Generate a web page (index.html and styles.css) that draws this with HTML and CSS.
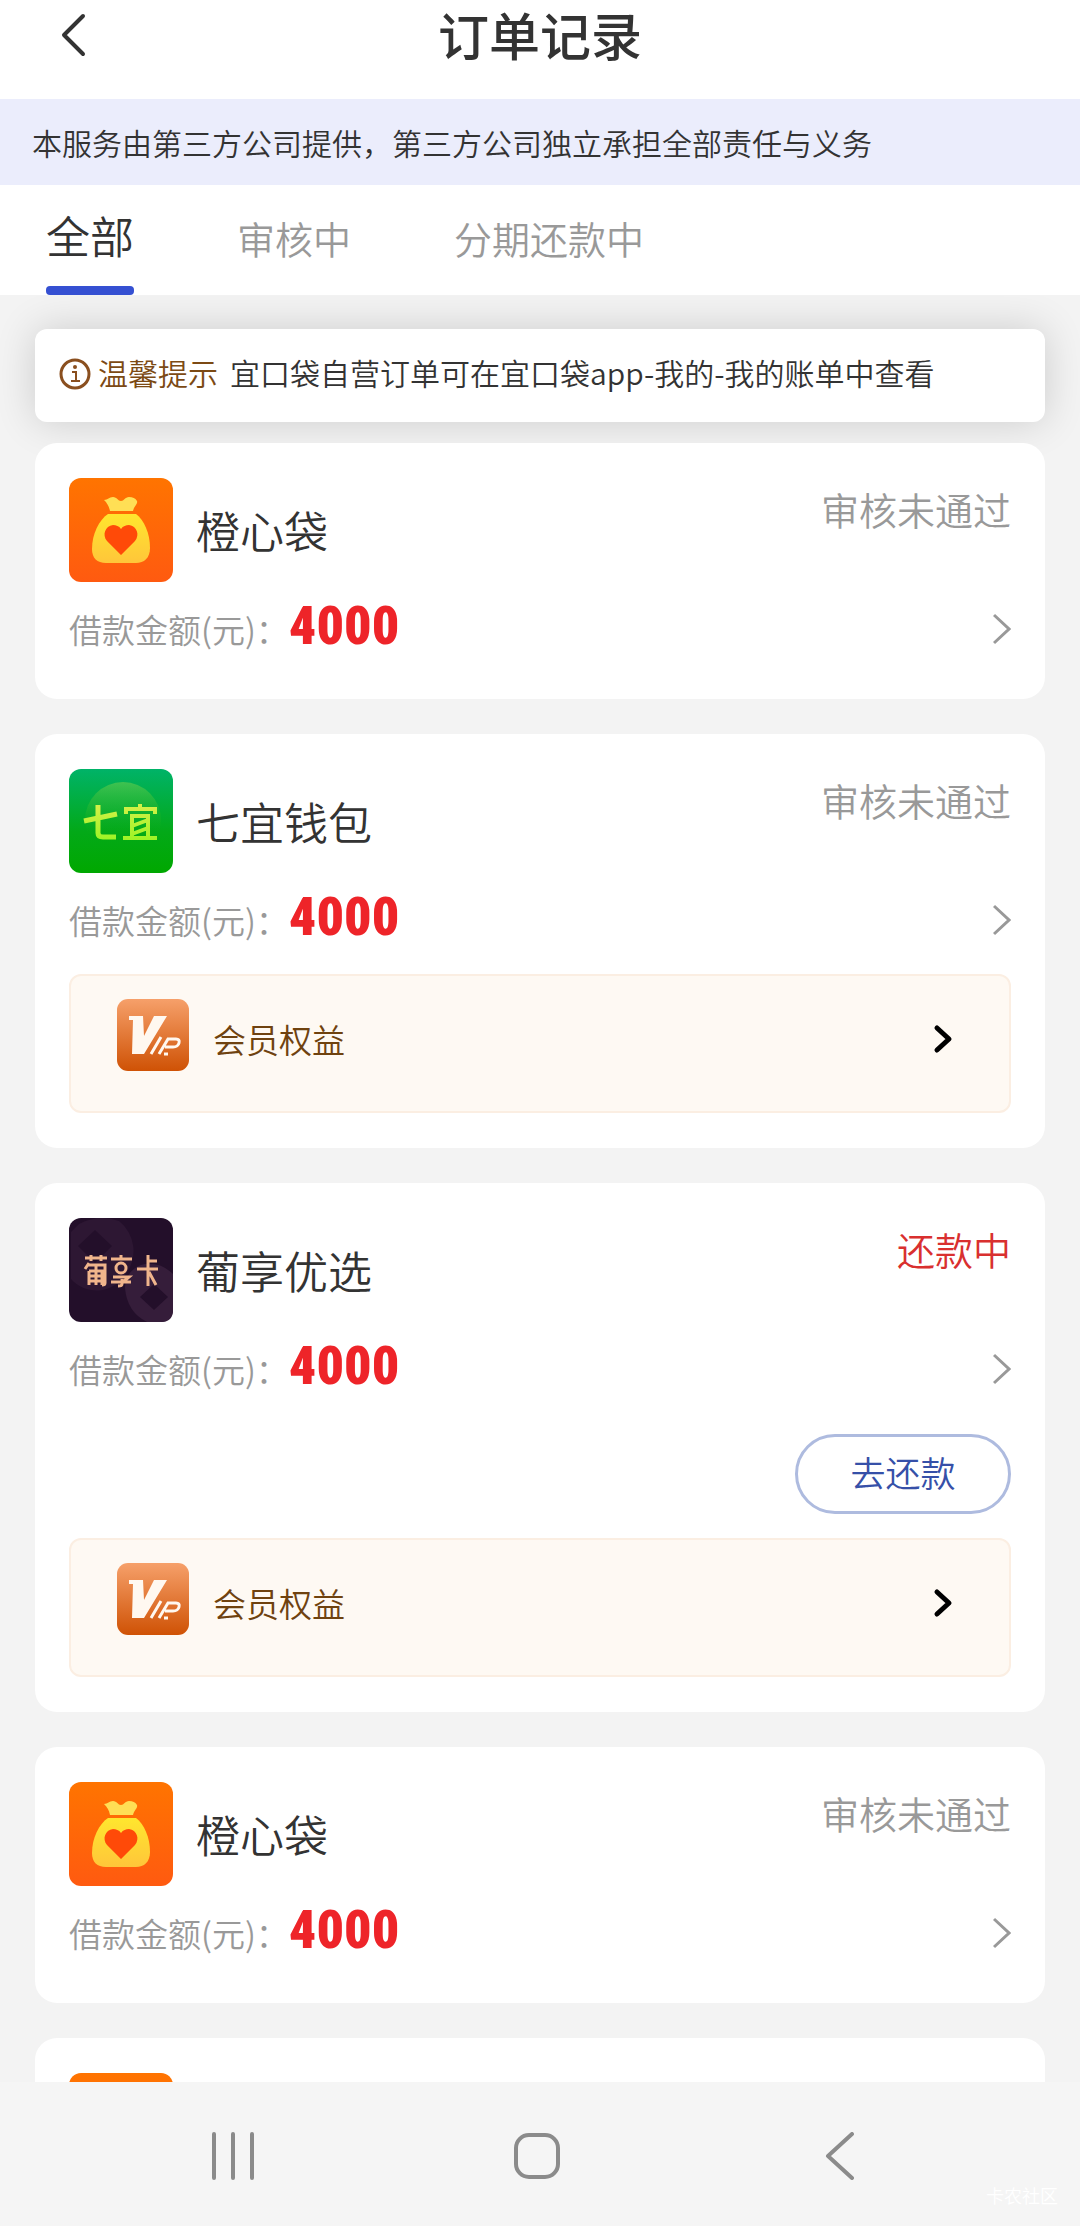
FILE: index.html
```html
<!DOCTYPE html>
<html lang="zh-CN">
<head>
<meta charset="utf-8">
<meta name="viewport" content="width=device-width, initial-scale=1">
<title>订单记录</title>
<link rel="stylesheet" href="styles.css">
</head>
<body>
<svg class="defs" aria-hidden="true">
  <defs>
    <linearGradient id="orange" x1="0" y1="0" x2="0" y2="1"><stop offset="0" stop-color="#ff7400"/><stop offset="1" stop-color="#ff5a10"/></linearGradient>
    <linearGradient id="gold" x1="0" y1="0" x2="0" y2="1"><stop offset="0" stop-color="#ffe62e"/><stop offset="1" stop-color="#ffc63a"/></linearGradient>
    <linearGradient id="green" x1="0" y1="0" x2="0" y2="1"><stop offset="0" stop-color="#00b368"/><stop offset=".6" stop-color="#03a918"/><stop offset="1" stop-color="#00a800"/></linearGradient>
    <linearGradient id="halo" x1="0" y1="0" x2="0" y2="1"><stop offset="0" stop-color="#7fd34a" stop-opacity=".5"/><stop offset=".7" stop-color="#20b010" stop-opacity="0"/></linearGradient>
    <linearGradient id="lime" gradientUnits="userSpaceOnUse" x1="0" y1="34" x2="0" y2="72"><stop offset="0" stop-color="#d8f04a"/><stop offset="1" stop-color="#9bf424"/></linearGradient>
    <linearGradient id="copper" x1="0" y1="0" x2="0" y2="1"><stop offset="0" stop-color="#f6a06a"/><stop offset="1" stop-color="#cf5205"/></linearGradient>
    <symbol id="logo-orange" viewBox="0 0 104 104">
      <rect width="104" height="104" rx="12" fill="url(#orange)"/>
      <path d="M35 22c4 0 5-3 9-3 4 0 5 4 8 4s4-4 8-4 6 1 8 4c1 3-3 5-4 10H41c-1-5-3-8-6-11z" fill="#ffdf55"/>
      <path d="M39 36h28c8 6 14 19 14 34 0 10-6 15-14 15H37c-9 0-14-5-14-14 0-15 7-29 16-35z" fill="url(#gold)"/>
      <path d="M52 77 38 63c-5-6-2-15 6-16 3 0 6 1 8 4 2-3 5-4 8-4 8 1 11 10 6 16z" fill="#ff4a08"/>
    </symbol>
    <symbol id="logo-green" viewBox="0 0 104 104">
      <rect width="104" height="104" rx="12" fill="url(#green)"/>
      <circle cx="54" cy="51" r="38" fill="url(#halo)"/>
      <path d="M15 52 48 45M29 36v28q0 4 5 4h13" fill="none" stroke="url(#lime)" stroke-width="5"/>
      <path d="M57 45v-5h29v5M71 35v5M54 69h34M63 69V47h16v22M63 57l16-6M63 65l16-6" fill="none" stroke="url(#lime)" stroke-width="4"/>
    </symbol>
    <symbol id="logo-grape" viewBox="0 0 104 104">
      <rect width="104" height="104" rx="12" fill="#230f2a"/>
      <path d="M10 6Q30-4 50 3a38 38 0 0 1 6 54 34 34 0 0 1-54 4V14z" fill="#2d1733"/>
      <path d="m26 12 17 16-17 17-17-17z" fill="#230f2a"/>
      <path d="M56 70a24 24 0 0 1 20-24q16-2 28 10v36q0 12-12 12H78Q58 94 56 70z" fill="#351d3a"/>
      <path d="m85 66 14 13-14 13-14-13z" fill="#230f2a"/>
      <g fill="none" stroke="#f0b58c" stroke-width="3">
        <path d="M16 40h22M22 37v6M32 37v6M20 45l-4 6M19 47h17v18q0 2-3 2M20 53v14M20 53h13v14M20 58h13M20 63h13M27 48v19"/>
        <path d="M42 41h21M52 37v4M44 59h16l-6 5M53 61v5q0 2-4 2M42 64h20"/><circle cx="52" cy="50" r="5"/>
        <path d="M79 37v31M79 43h9M68 51h21M80 54l7 13"/>
      </g>
    </symbol>
    <symbol id="logo-vip" viewBox="0 0 72 72">
      <rect width="72" height="72" rx="11" fill="url(#copper)"/>
      <path d="M12 17h14l1 20 10-20h13L27 55H15l1-34h-4z" fill="#fff8f0"/>
      <path d="M34 55l10-17M42 55l9-15h8q4 0 3 4t-6 4h-8M47 55h4" fill="none" stroke="#fff8f0" stroke-width="3"/>
    </symbol>
    <symbol id="go" viewBox="0 0 18 32"><path d="M1 2l15 14L1 30" fill="none" stroke="#999" stroke-width="3"/></symbol>
    <symbol id="go-bold" viewBox="0 0 20 32"><path d="M4 5l12 11L4 27" fill="none" stroke="#000" stroke-width="5" stroke-linecap="round" stroke-linejoin="round"/></symbol>
  </defs>
</svg>

<div class="app">
  <header class="topbar">
    <button class="back" type="button" aria-label="返回">
      <svg width="28" height="68" viewBox="0 0 28 68"><path d="M23 16 4 35l19 19" fill="none" stroke="#333" stroke-width="4" stroke-linecap="round" stroke-linejoin="round"/></svg>
    </button>
    <h1 class="title">订单记录</h1>
  </header>
  <p class="notice">本服务由第三方公司提供，第三方公司独立承担全部责任与义务</p>
  <nav class="tabs">
    <a class="tab active" href="#all">全部</a>
    <a class="tab" href="#review">审核中</a>
    <a class="tab" href="#repay">分期还款中</a>
  </nav>

  <main class="list">
    <p class="tip">
      <svg class="tip-icon" viewBox="0 0 32 32"><circle cx="16" cy="16" r="14" fill="none" stroke="#8a4f1f" stroke-width="3"/><path d="M13 14h4v9M12 23h9" fill="none" stroke="#8a4f1f" stroke-width="2"/><circle cx="16" cy="9" r="2" fill="#8a4f1f"/></svg>
      <strong class="tip-label">温馨提示</strong>
      <span>宜口袋自营订单可在宜口袋app-我的-我的账单中查看</span>
    </p>

    <article class="card">
      <div class="head"><svg class="logo"><use href="#logo-orange"/></svg><h2 class="name">橙心袋</h2><span class="status">审核未通过</span></div>
      <a class="amount" href="#order1"><span class="label">借款金额(元)：</span><span class="sum">4000</span><svg class="go"><use href="#go"/></svg></a>
    </article>

    <article class="card">
      <div class="head"><svg class="logo"><use href="#logo-green"/></svg><h2 class="name">七宜钱包</h2><span class="status">审核未通过</span></div>
      <a class="amount" href="#order2"><span class="label">借款金额(元)：</span><span class="sum">4000</span><svg class="go"><use href="#go"/></svg></a>
      <a class="vip" href="#vip2"><svg class="vip-logo"><use href="#logo-vip"/></svg><span class="vip-text">会员权益</span><svg class="go-bold"><use href="#go-bold"/></svg></a>
    </article>

    <article class="card">
      <div class="head"><svg class="logo"><use href="#logo-grape"/></svg><h2 class="name">葡享优选</h2><span class="status due">还款中</span></div>
      <a class="amount" href="#order3"><span class="label">借款金额(元)：</span><span class="sum">4000</span><svg class="go"><use href="#go"/></svg></a>
      <button class="repay" type="button">去还款</button>
      <a class="vip" href="#vip3"><svg class="vip-logo"><use href="#logo-vip"/></svg><span class="vip-text">会员权益</span><svg class="go-bold"><use href="#go-bold"/></svg></a>
    </article>

    <article class="card">
      <div class="head"><svg class="logo"><use href="#logo-orange"/></svg><h2 class="name">橙心袋</h2><span class="status">审核未通过</span></div>
      <a class="amount" href="#order4"><span class="label">借款金额(元)：</span><span class="sum">4000</span><svg class="go"><use href="#go"/></svg></a>
    </article>

    <article class="card">
      <div class="head"><svg class="logo"><use href="#logo-orange"/></svg></div>
    </article>
  </main>

  <footer class="sysbar">
    <button class="sys" type="button" aria-label="最近任务"><svg width="48" height="48" viewBox="0 0 48 48"><path d="M4 2v44M23 2v44M42 2v44" stroke="#8b8b8b" stroke-width="4" stroke-linecap="round"/></svg></button>
    <button class="sys" type="button" aria-label="主屏幕"><svg width="48" height="48" viewBox="0 0 48 48"><rect x="3" y="3" width="42" height="42" rx="13" fill="none" stroke="#8b8b8b" stroke-width="4"/></svg></button>
    <button class="sys" type="button" aria-label="后退"><svg width="48" height="48" viewBox="0 0 48 48"><path d="M36 2 12 24l24 22" fill="none" stroke="#8b8b8b" stroke-width="4" stroke-linecap="round" stroke-linejoin="round"/></svg></button>
    <span class="mark">卡农社区</span>
  </footer>
</div>
</body>
</html>
```
FILE: styles.css
```css
* { box-sizing: border-box; }
body {
  margin: 0;
  background: #f3f3f3;
  color: #333;
  font-family: "Noto Sans CJK SC", "Noto Sans", sans-serif;
  font-weight: 350;
}
h1, h2, p { margin: 0; }
a { color: inherit; text-decoration: none; }
button { padding: 0; border: 0; background: none; font-family: inherit; font-weight: inherit; }
svg { display: block; flex: none; }
.defs { position: absolute; width: 0; height: 0; }

.app { display: flex; flex-direction: column; height: 100vh; }

.topbar {
  display: grid;
  grid-template-columns: 120px 1fr 120px;
  align-items: start;
  height: 99px;
  background: #fff;
}
.back { display: flex; padding: 0 0 0 60px; }
.title { font-size: 51px; line-height: 68px; font-weight: 500; text-align: center; }

.notice {
  padding: 20px 32px;
  background: #ebedfc;
  font-size: 30px;
  line-height: 46px;
}

.tabs {
  display: flex;
  align-items: stretch;
  gap: 103px;
  height: 110px;
  padding: 0 46px;
  background: #fff;
}
.tab { font-size: 38px; line-height: 106px; color: #999; }
.tab.active {
  display: flex;
  flex-direction: column;
  justify-content: space-between;
  font-size: 44px;
  line-height: 101px;
  color: #333;
}
.tab.active::after { content: ""; height: 9px; border-radius: 4px; background: #3550d2; }

.list {
  display: flex;
  flex: 1;
  flex-direction: column;
  gap: 35px;
  min-height: 0;
  padding: 34px 35px 35px;
  overflow-y: auto;
  scrollbar-width: none;
}
.tip {
  display: flex;
  flex: none;
  align-items: center;
  margin-bottom: -14px;
  padding: 20px 24px 27px;
  border-radius: 12px;
  background: #fff;
  box-shadow: 0 0 40px rgba(0, 0, 0, .16);
  font-size: 30px;
  line-height: 46px;
}
.tip-icon { width: 32px; height: 32px; margin: 4px 7px 0 0; }
.tip-label { margin-right: 12px; font-weight: inherit; color: #7c4a14; }

.card {
  display: flex;
  flex: none;
  flex-direction: column;
  padding: 35px 34px;
  border-radius: 22px;
  background: #fff;
}
.head { display: flex; align-items: center; height: 104px; }
.logo { width: 104px; height: 104px; margin-right: 23px; }
.name { flex: 1; font-size: 44px; line-height: 64px; font-weight: inherit; }
.status { align-self: flex-start; font-size: 38px; line-height: 62px; color: #999; }
.due { color: #d9302f; }

.amount { display: flex; align-items: center; height: 82px; padding-top: 12px; }
.label { font-size: 33px; line-height: 48px; color: #999; }
.sum {
  flex: 1;
  padding-bottom: 6px;
  font-family: "Roboto Condensed", "Liberation Sans Narrow", Roboto, sans-serif;
  font-size: 54px;
  line-height: 64px;
  font-weight: 900;
  color: #ee2429;
}
.go { width: 18px; height: 32px; }

.repay {
  align-self: flex-end;
  width: 216px;
  height: 80px;
  margin: 30px 0 5px;
  padding-bottom: 4px;
  border: 3px solid #aebbdf;
  border-radius: 40px;
  font-size: 35px;
  line-height: 52px;
  color: #3650a8;
}
.vip {
  display: flex;
  align-items: center;
  height: 139px;
  margin-top: 19px;
  padding: 0 56px 10px 46px;
  border: 2px solid #fbeee2;
  border-radius: 12px;
  background: #fef9f3;
  color: #6f420f;
}
.vip-logo { width: 72px; height: 72px; margin: 0 24px 8px 0; }
.vip-text { flex: 1; font-size: 33px; line-height: 48px; }
.go-bold { width: 20px; height: 32px; }

.sysbar {
  position: relative;
  display: grid;
  flex: none;
  grid-template-columns: repeat(3, 1fr);
  height: 144px;
  padding: 4px 89px 0 82px;
  background: #f5f5f5;
}
.sys { display: flex; align-items: center; justify-content: center; }
.mark { position: absolute; right: 22px; bottom: 18px; font-size: 18px; line-height: 26px; color: #fff; }
```
